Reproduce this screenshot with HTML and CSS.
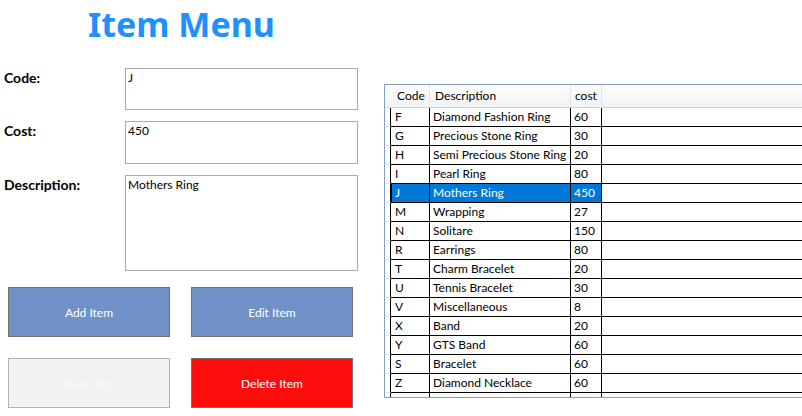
FILE: index.html
```html
<!DOCTYPE html>
<html>
<head>
<meta charset="utf-8">
<link rel="stylesheet" href="styles.css">
</head>
<body>
<div class="window">
  <div class="left">
    <h1 class="title">Item Menu</h1>
    <div class="form">
      <label class="lbl">Code:</label>
      <div class="box box-code">J</div>
      <label class="lbl">Cost:</label>
      <div class="box box-cost">450</div>
      <label class="lbl">Description:</label>
      <div class="box box-desc">Mothers Ring</div>
    </div>
    <div class="buttons">
      <button class="btn btn-blue">Add Item</button>
      <button class="btn btn-blue">Edit Item</button>
      <button class="btn btn-disabled">Save Item</button>
      <button class="btn btn-red">Delete Item</button>
    </div>
  </div>
  <div class="grid">
    <div class="ghead">
      <div class="rh"></div>
      <div class="hc c-code">Code</div>
      <div class="hc c-desc">Description</div>
      <div class="hc c-cost">cost</div>
      <div class="hc c-fill"></div>
    </div>
    <div class="gbody">
      <div class="row"><div class="rh"></div><div class="c c-code">F</div><div class="c c-desc">Diamond Fashion Ring</div><div class="c c-cost">60</div><div class="c c-fill"></div></div>
      <div class="row"><div class="rh"></div><div class="c c-code">G</div><div class="c c-desc">Precious Stone Ring</div><div class="c c-cost">30</div><div class="c c-fill"></div></div>
      <div class="row"><div class="rh"></div><div class="c c-code">H</div><div class="c c-desc">Semi Precious Stone Ring</div><div class="c c-cost">20</div><div class="c c-fill"></div></div>
      <div class="row"><div class="rh"></div><div class="c c-code">I</div><div class="c c-desc">Pearl Ring</div><div class="c c-cost">80</div><div class="c c-fill"></div></div>
      <div class="row sel"><div class="rh"></div><div class="c c-code">J</div><div class="c c-desc">Mothers Ring</div><div class="c c-cost">450</div><div class="c c-fill"></div></div>
      <div class="row"><div class="rh"></div><div class="c c-code">M</div><div class="c c-desc">Wrapping</div><div class="c c-cost">27</div><div class="c c-fill"></div></div>
      <div class="row"><div class="rh"></div><div class="c c-code">N</div><div class="c c-desc">Solitare</div><div class="c c-cost">150</div><div class="c c-fill"></div></div>
      <div class="row"><div class="rh"></div><div class="c c-code">R</div><div class="c c-desc">Earrings</div><div class="c c-cost">80</div><div class="c c-fill"></div></div>
      <div class="row"><div class="rh"></div><div class="c c-code">T</div><div class="c c-desc">Charm Bracelet</div><div class="c c-cost">20</div><div class="c c-fill"></div></div>
      <div class="row"><div class="rh"></div><div class="c c-code">U</div><div class="c c-desc">Tennis Bracelet</div><div class="c c-cost">30</div><div class="c c-fill"></div></div>
      <div class="row"><div class="rh"></div><div class="c c-code">V</div><div class="c c-desc">Miscellaneous</div><div class="c c-cost">8</div><div class="c c-fill"></div></div>
      <div class="row"><div class="rh"></div><div class="c c-code">X</div><div class="c c-desc">Band</div><div class="c c-cost">20</div><div class="c c-fill"></div></div>
      <div class="row"><div class="rh"></div><div class="c c-code">Y</div><div class="c c-desc">GTS Band</div><div class="c c-cost">60</div><div class="c c-fill"></div></div>
      <div class="row"><div class="rh"></div><div class="c c-code">S</div><div class="c c-desc">Bracelet</div><div class="c c-cost">60</div><div class="c c-fill"></div></div>
      <div class="row"><div class="rh"></div><div class="c c-code">Z</div><div class="c c-desc">Diamond Necklace</div><div class="c c-cost">60</div><div class="c c-fill"></div></div>
      <div class="row"><div class="rh"></div><div class="c c-code">1</div><div class="c c-desc">GTS Diamond Band</div><div class="c c-cost">60</div><div class="c c-fill"></div></div>
    </div>
  </div>
</div>
</body>
</html>
```
FILE: styles.css
```css
html, body {
  margin: 0;
  padding: 0;
  background: #ffffff;
}
body {
  width: 802px;
  height: 416px;
  overflow: hidden;
  font-family: Lato, "Noto Sans", sans-serif;
  font-size: 12px;
  color: #000;
}
.window {
  display: flex;
  width: 802px;
  height: 416px;
  overflow: hidden;
}
.left {
  width: 384px;
  flex: none;
}
.title {
  width: 363px;
  margin: 4px 0 0 0;
  height: 40px;
  line-height: 40px;
  font-family: "Noto Sans", sans-serif;
  font-size: 34px;
  font-weight: 700;
  color: #1e90ff;
  text-align: center;
}
.form {
  margin-top: 24px;
  display: grid;
  grid-template-columns: 125px 233px;
  grid-template-rows: 42px 43px 96px;
  row-gap: 11px;
}
.lbl {
  font-size: 14px;
  font-weight: 700;
  line-height: 16px;
  padding: 2px 0 0 4px;
}
.box {
  box-sizing: border-box;
  border: 1px solid #a9abae;
  padding: 1px 2px;
  line-height: 15px;
  font-size: 12px;
}
.buttons {
  margin-top: 16px;
  padding-left: 8px;
  display: grid;
  grid-template-columns: 162px 162px;
  grid-auto-rows: 50px;
  column-gap: 21px;
  row-gap: 21px;
}
.btn {
  box-sizing: border-box;
  margin: 0;
  font-family: Lato, "Noto Sans", sans-serif;
  font-size: 12px;
  color: #ffffff;
  border: 1px solid #707070;
  padding: 0;
}
.btn-blue {
  background: #7192c9;
}
.btn-disabled {
  background: #f2f2f2;
  border-color: #adb2b5;
  color: #fbfbfb;
}
.btn-red {
  background: #ff0d0d;
}
.grid {
  flex: none;
  box-sizing: border-box;
  width: 440px;
  height: 314px;
  margin-top: 84px;
  border-top: 1px solid #829fc4;
  border-left: 1px solid #829fc4;
  border-bottom: 1px solid #829fc4;
  display: flex;
  flex-direction: column;
  overflow: hidden;
}
.ghead {
  flex: none;
  display: flex;
  height: 22px;
  border-bottom: 1px solid #d5d5d5;
  background: linear-gradient(#ffffff, #f1f2f4);
}
.ghead .rh {
  width: 6px;
  flex: none;
}
.hc {
  box-sizing: border-box;
  line-height: 22px;
  border-right: 1px solid #e2e4e8;
  padding-left: 5px;
  flex: none;
}
.gbody {
  flex: 1;
  overflow: hidden;
}
.row {
  display: flex;
  height: 19px;
  box-sizing: border-box;
}
.row .rh {
  box-sizing: border-box;
  width: 6px;
  flex: none;
  border-bottom: 1px solid #e4e7ec;
  border-right: 1px solid #000;
  background: #fff;
}
.c {
  box-sizing: border-box;
  flex: none;
  line-height: 18px;
  border-bottom: 1px solid #000;
  border-right: 1px solid #000;
  padding-left: 3px;
  white-space: nowrap;
  overflow: hidden;
}
.c-code { width: 39px; }
.hc.c-code { padding-left: 6px; }
.c.c-code { padding-left: 4px; }
.c-desc { width: 141px; }
.c-cost { width: 31px; }
.hc.c-cost { padding-left: 4px; }
.c-fill { flex: 1; border-right: none; }
.hc.c-fill { border-right: none; }
.sel .c-code, .sel .c-desc, .sel .c-cost {
  background: #0078d7;
  color: #fff;
}
.sel .c-code {
  box-shadow: inset 1px 0 0 #000;
}
```
